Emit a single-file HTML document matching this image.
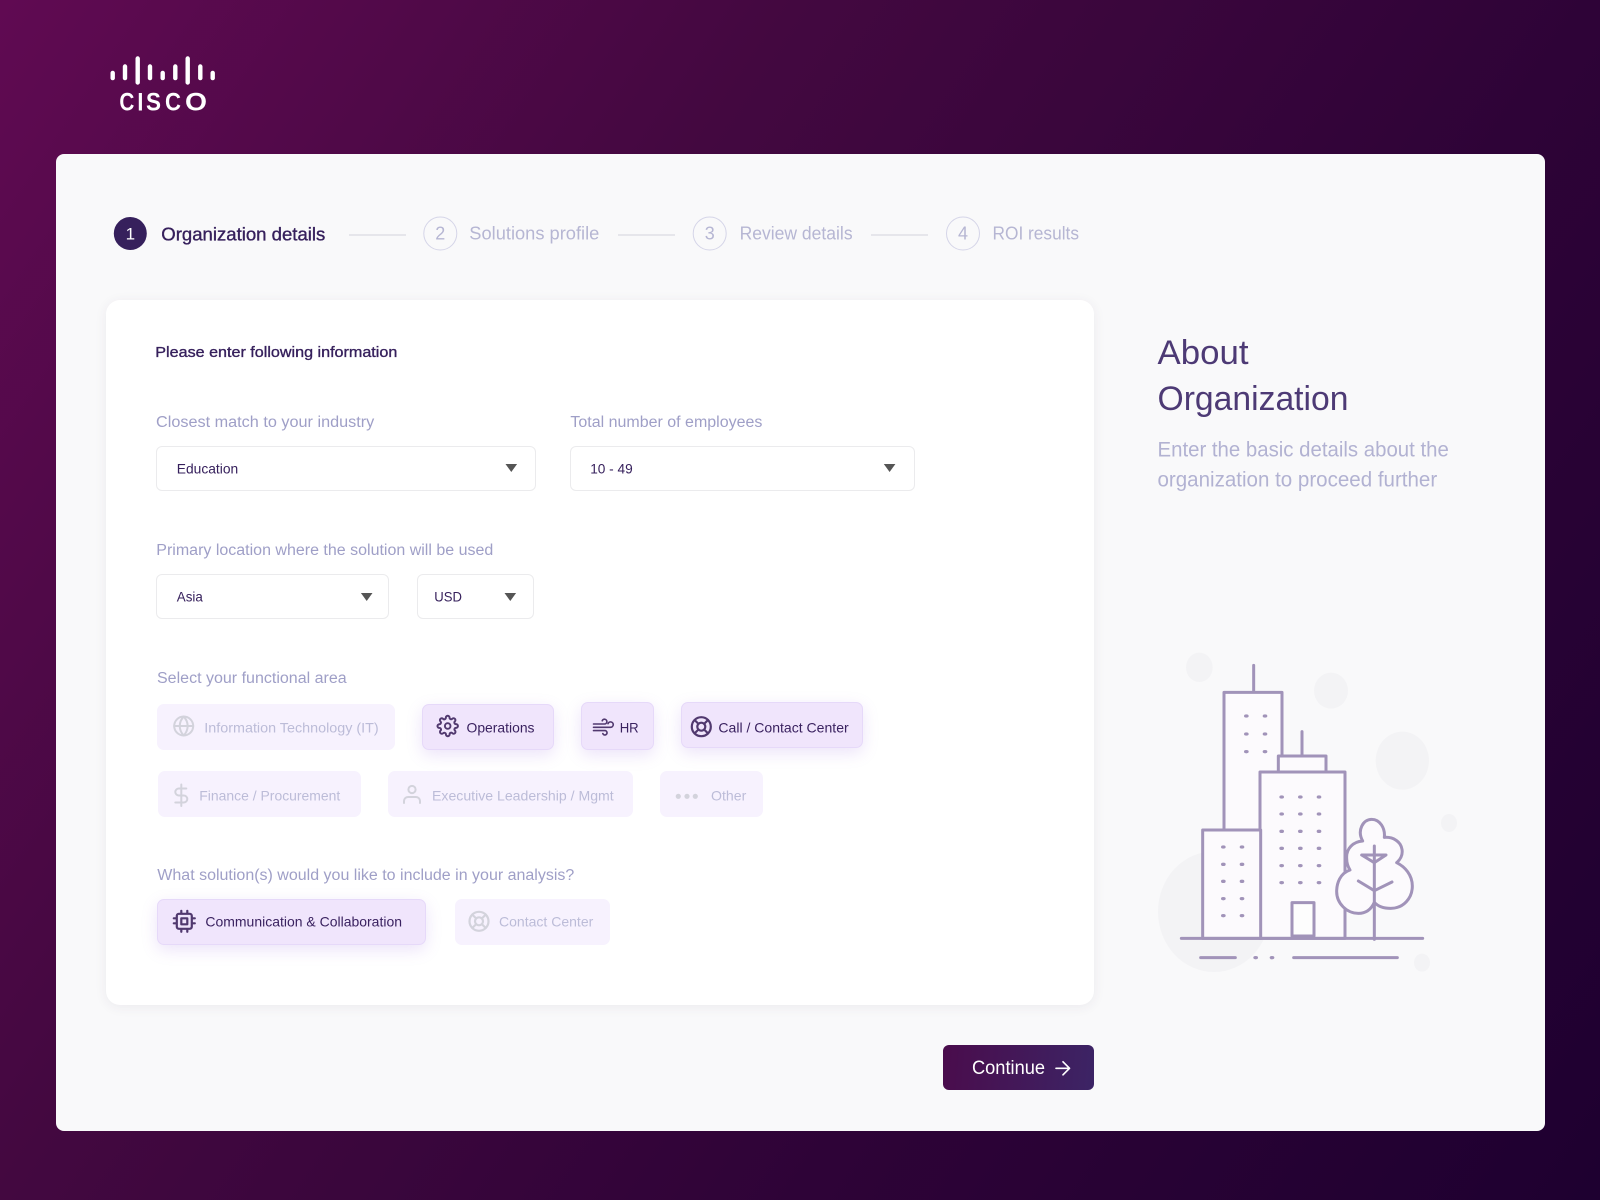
<!DOCTYPE html>
<html lang="en">
<head>
<meta charset="utf-8">
<title>Cisco - Organization details</title>
<style>
html,body{margin:0;padding:0;width:1600px;height:1200px;overflow:hidden}
body{position:relative;background:linear-gradient(123.7deg,#600a52 0%,#430840 33.3%,#2e0337 66.7%,#1e0030 100%);font-family:"Liberation Sans",sans-serif}
div{position:absolute;box-sizing:border-box}
.card{left:56px;top:154px;width:1489px;height:977px;background:#f9f9fa;border-radius:8px}
.panel{left:106px;top:300px;width:988px;height:705px;background:#fff;border-radius:14px;box-shadow:0 2px 12px rgba(60,40,90,.07)}
.sel{background:#fff;border:1.5px solid #ebebed;border-radius:6px}
.chip{background:#f7f2fe;border-radius:7px}
.on{background:#f0e5fc;border:1px solid #e6d9f9;box-shadow:0 5px 16px rgba(150,100,220,.18)}
.btn{left:943px;top:1045px;width:151px;height:45px;border-radius:6px;background:linear-gradient(95deg,#4a0c4c,#3c2465)}
svg.o{position:absolute;left:0;top:0}
text{font-family:"Liberation Sans",sans-serif}
.d{fill:#36205c}
.l{fill:#9f9fc7;font-size:15.5px}
.m{fill:#b6b6d3;font-size:18px}
.f{fill:#bcbcd8;font-size:14px}
.a{fill:#3a2260;font-size:14px}
.v{fill:#36205c;font-size:14px}
.ic{fill:none;stroke-linecap:round;stroke-linejoin:round}
.dim{stroke:#d3d3dc;stroke-width:2}
.act{stroke:#51396f;stroke-width:1.9}
</style>
</head>
<body>
<div class="card"></div>
<div class="panel"></div>

<div class="sel" style="left:156px;top:446px;width:380px;height:45px"></div>
<div class="sel" style="left:570px;top:446px;width:345px;height:45px"></div>
<div class="sel" style="left:156px;top:574px;width:233px;height:45px"></div>
<div class="sel" style="left:417px;top:574px;width:117px;height:45px"></div>

<div class="chip" style="left:157px;top:704px;width:238px;height:46px"></div>
<div class="chip on" style="left:422px;top:704px;width:132px;height:46px"></div>
<div class="chip on" style="left:581px;top:702px;width:73px;height:48px"></div>
<div class="chip on" style="left:681px;top:702px;width:182px;height:46px"></div>
<div class="chip" style="left:158px;top:771px;width:203px;height:46px"></div>
<div class="chip" style="left:388px;top:771px;width:245px;height:46px"></div>
<div class="chip" style="left:660px;top:771px;width:103px;height:46px"></div>
<div class="chip on" style="left:157px;top:899px;width:269px;height:46px"></div>
<div class="chip" style="left:455px;top:899px;width:155px;height:46px"></div>
<div class="btn"></div>

<svg class="o" width="1600" height="1200" viewBox="0 0 1600 1200" xmlns="http://www.w3.org/2000/svg">
  <!-- logo -->
  <g fill="#fff">
    <rect x="110.5" y="70.7" width="4.4" height="9.6" rx="2.2"/>
    <rect x="122.8" y="64.3" width="4.4" height="16" rx="2.2"/>
    <rect x="135.5" y="56.3" width="4.4" height="28.4" rx="2.2"/>
    <rect x="147.8" y="64.3" width="4.4" height="16" rx="2.2"/>
    <rect x="160.5" y="70.7" width="4.4" height="9.6" rx="2.2"/>
    <rect x="173.1" y="64.3" width="4.4" height="16" rx="2.2"/>
    <rect x="185.5" y="56.3" width="4.4" height="28.4" rx="2.2"/>
    <rect x="198.1" y="64.3" width="4.4" height="16" rx="2.2"/>
    <rect x="210.5" y="70.7" width="4.4" height="9.6" rx="2.2"/>
    <g font-size="25" font-weight="700">
      <text x="119.4" y="110.7" textLength="15" lengthAdjust="spacingAndGlyphs">C</text>
      <text x="137.4" y="110.7" textLength="6" lengthAdjust="spacingAndGlyphs">I</text>
      <text x="146" y="110.7" textLength="15" lengthAdjust="spacingAndGlyphs">S</text>
      <text x="165" y="110.7" textLength="16" lengthAdjust="spacingAndGlyphs">C</text>
      <text x="185" y="110.7" textLength="22" lengthAdjust="spacingAndGlyphs">O</text>
    </g>
  </g>

  <!-- stepper -->
  <circle cx="130.3" cy="233.5" r="16.5" fill="#36205c"/>
  <text x="130.3" y="239.5" text-anchor="middle" font-size="17" fill="#fff">1</text>
  <text x="161.3" y="240.3" font-size="18" class="d" stroke="#36205c" stroke-width=".35" textLength="164" lengthAdjust="spacingAndGlyphs">Organization details</text>
  <line x1="349" y1="235" x2="406" y2="235" stroke="#d2d2dc" stroke-width="1"/>
  <circle cx="440.3" cy="233.5" r="16.5" fill="none" stroke="#d5d5e8" stroke-width="1"/>
  <text x="440.3" y="239.5" text-anchor="middle" class="m">2</text>
  <text x="469.3" y="239.5" class="m" textLength="130" lengthAdjust="spacingAndGlyphs">Solutions profile</text>
  <line x1="618" y1="235" x2="675" y2="235" stroke="#d2d2dc" stroke-width="1"/>
  <circle cx="709.7" cy="233.5" r="16.5" fill="none" stroke="#d5d5e8" stroke-width="1"/>
  <text x="709.7" y="239.5" text-anchor="middle" class="m">3</text>
  <text x="739.6" y="239.5" class="m" textLength="113" lengthAdjust="spacingAndGlyphs">Review details</text>
  <line x1="871" y1="235" x2="928" y2="235" stroke="#d2d2dc" stroke-width="1"/>
  <circle cx="963" cy="233.5" r="16.5" fill="none" stroke="#d5d5e8" stroke-width="1"/>
  <text x="963" y="239.5" text-anchor="middle" class="m">4</text>
  <text x="992.5" y="239.5" class="m" textLength="86.5" lengthAdjust="spacingAndGlyphs">ROI results</text>

  <!-- form text -->
  <text x="155.3" y="357" font-size="15" class="d" stroke="#36205c" stroke-width=".35" textLength="242" lengthAdjust="spacingAndGlyphs">Please enter following information</text>
  <text x="156" y="427" class="l" textLength="218.3" lengthAdjust="spacingAndGlyphs">Closest match to your industry</text>
  <text x="570.4" y="427" class="l" textLength="192" lengthAdjust="spacingAndGlyphs">Total number of employees</text>
  <text x="176.8" y="473.3" class="v" textLength="61.4" lengthAdjust="spacingAndGlyphs">Education</text>
  <text x="590.2" y="473.3" class="v" textLength="42.5" lengthAdjust="spacingAndGlyphs">10 - 49</text>
  <path d="M505.5 464h11.6l-5.8 8z" fill="#555"/>
  <path d="M883.8 464h11.6l-5.8 8z" fill="#555"/>

  <text x="156.3" y="555" class="l" textLength="337" lengthAdjust="spacingAndGlyphs">Primary location where the solution will be used</text>
  <text x="176.8" y="601.3" class="v" textLength="26" lengthAdjust="spacingAndGlyphs">Asia</text>
  <text x="434.3" y="601.3" class="v" textLength="27.7" lengthAdjust="spacingAndGlyphs">USD</text>
  <path d="M360.9 593h11.6l-5.8 8z" fill="#555"/>
  <path d="M504.5 593h11.6l-5.8 8z" fill="#555"/>

  <text x="157" y="683" class="l" textLength="189.7" lengthAdjust="spacingAndGlyphs">Select your functional area</text>
  <text x="204.3" y="732.5" class="f" textLength="174.4" lengthAdjust="spacingAndGlyphs">Information Technology (IT)</text>
  <text x="466.5" y="732.5" class="a" textLength="68" lengthAdjust="spacingAndGlyphs">Operations</text>
  <text x="619.7" y="732.5" class="a" textLength="19" lengthAdjust="spacingAndGlyphs">HR</text>
  <text x="718.4" y="732.5" class="a" textLength="130.3" lengthAdjust="spacingAndGlyphs">Call / Contact Center</text>
  <text x="199.3" y="800.3" class="f" textLength="141" lengthAdjust="spacingAndGlyphs">Finance / Procurement</text>
  <text x="432" y="800.3" class="f" textLength="181.7" lengthAdjust="spacingAndGlyphs">Executive Leadership / Mgmt</text>
  <text x="711" y="800.3" class="f" textLength="35.3" lengthAdjust="spacingAndGlyphs">Other</text>
  <text x="157.3" y="880" class="l" textLength="417" lengthAdjust="spacingAndGlyphs">What solution(s) would you like to include in your analysis?</text>
  <text x="205.4" y="926.7" class="a" textLength="196.6" lengthAdjust="spacingAndGlyphs">Communication &amp; Collaboration</text>
  <text x="499" y="926.7" class="f" textLength="94.3" lengthAdjust="spacingAndGlyphs">Contact Center</text>

  <!-- chip icons -->
  <g class="ic dim" transform="translate(171.7,714)">
    <circle cx="12" cy="12" r="9.5"/><line x1="2.5" y1="12" x2="21.5" y2="12"/>
    <path d="M12 2.5a14.5 14.5 0 0 1 4 9.5 14.5 14.5 0 0 1-4 9.5 14.5 14.5 0 0 1-4-9.5 14.5 14.5 0 0 1 4-9.5z"/>
  </g>
  <g class="ic act" transform="translate(447.7,726) scale(.93) translate(-12,-12)" style="stroke-width:2.1">
    <circle cx="12" cy="12" r="3"/>
    <path d="M19.4 15a1.65 1.65 0 0 0 .33 1.82l.06.06a2 2 0 0 1 0 2.83 2 2 0 0 1-2.83 0l-.06-.06a1.65 1.65 0 0 0-1.82-.33 1.65 1.65 0 0 0-1 1.51V21a2 2 0 0 1-2 2 2 2 0 0 1-2-2v-.09A1.65 1.65 0 0 0 9 19.4a1.65 1.65 0 0 0-1.82.33l-.06.06a2 2 0 0 1-2.83 0 2 2 0 0 1 0-2.83l.06-.06a1.65 1.65 0 0 0 .33-1.82 1.65 1.65 0 0 0-1.51-1H3a2 2 0 0 1-2-2 2 2 0 0 1 2-2h.09A1.65 1.65 0 0 0 4.6 9a1.65 1.65 0 0 0-.33-1.82l-.06-.06a2 2 0 0 1 0-2.83 2 2 0 0 1 2.83 0l.06.06a1.65 1.65 0 0 0 1.82.33H9a1.65 1.65 0 0 0 1-1.51V3a2 2 0 0 1 2-2 2 2 0 0 1 2 2v.09a1.65 1.65 0 0 0 1 1.51 1.65 1.65 0 0 0 1.82-.33l.06-.06a2 2 0 0 1 2.83 0 2 2 0 0 1 0 2.83l-.06.06a1.65 1.65 0 0 0-.33 1.82V9a1.65 1.65 0 0 0 1.51 1H21a2 2 0 0 1 2 2 2 2 0 0 1-2 2h-.09a1.65 1.65 0 0 0-1.51 1z"/>
  </g>
  <g class="ic act" style="stroke-width:1.6">
    <path d="M593.5 724H604.5a2.4 2.4 0 1 0-2.3-3.2M593.5 727.3H610.5a2.7 2.7 0 1 0-2.5-3.6M593.5 730.6H604.8a2.2 2.2 0 1 1-2 3"/>
  </g>
  <g class="ic act" transform="translate(689.3,714.7)" style="stroke-width:2.2">
    <circle cx="12" cy="12" r="9.5"/><circle cx="12" cy="12" r="4"/>
    <line x1="5.3" y1="5.3" x2="9.17" y2="9.17"/><line x1="14.83" y1="14.83" x2="18.7" y2="18.7"/>
    <line x1="14.83" y1="9.17" x2="18.7" y2="5.3"/><line x1="5.3" y1="18.7" x2="9.17" y2="14.83"/>
  </g>
  <g class="ic dim" transform="translate(169.3,783)">
    <line x1="12" y1="1.5" x2="12" y2="23"/>
    <path d="M17 5.5H9.5a3.5 3.5 0 0 0 0 7h5a3.5 3.5 0 0 1 0 7H6"/>
  </g>
  <g class="ic dim" transform="translate(400,782)">
    <path d="M20 21v-2a4 4 0 0 0-4-4H8a4 4 0 0 0-4 4v2"/><circle cx="12" cy="7.5" r="3.6"/>
  </g>
  <g fill="#d3d3dc">
    <circle cx="678.3" cy="796.3" r="2.6"/><circle cx="687" cy="796.3" r="2.6"/><circle cx="695.3" cy="796.3" r="2.6"/>
  </g>
  <g class="ic act" transform="translate(172.3,909.3)" style="stroke-width:2.2">
    <rect x="4.5" y="4.5" width="15" height="15" rx="2"/><rect x="9" y="9" width="6" height="6"/>
    <line x1="9" y1="1.5" x2="9" y2="4"/><line x1="15" y1="1.5" x2="15" y2="4"/>
    <line x1="9" y1="20" x2="9" y2="22.5"/><line x1="15" y1="20" x2="15" y2="22.5"/>
    <line x1="20" y1="9" x2="22.5" y2="9"/><line x1="20" y1="14" x2="22.5" y2="14"/>
    <line x1="1.5" y1="9" x2="4" y2="9"/><line x1="1.5" y1="14" x2="4" y2="14"/>
  </g>
  <g class="ic dim" transform="translate(467,909.3)" style="stroke-width:2.2">
    <circle cx="12" cy="12" r="9.5"/><circle cx="12" cy="12" r="4"/>
    <line x1="5.3" y1="5.3" x2="9.17" y2="9.17"/><line x1="14.83" y1="14.83" x2="18.7" y2="18.7"/>
    <line x1="14.83" y1="9.17" x2="18.7" y2="5.3"/><line x1="5.3" y1="18.7" x2="9.17" y2="14.83"/>
  </g>

  <!-- continue -->
  <text x="972" y="1073.8" font-size="19" fill="#fff" textLength="73" lengthAdjust="spacingAndGlyphs">Continue</text>
  <path d="M1056 1068.3h13M1063 1061.8l6.5 6.5-6.5 6.5" fill="none" stroke="#fff" stroke-width="1.7" stroke-linecap="round" stroke-linejoin="round"/>

  <!-- about -->
  <text x="1157.5" y="364" font-size="34" fill="#4d3a75" textLength="91" lengthAdjust="spacingAndGlyphs">About</text>
  <text x="1157.5" y="410" font-size="34" fill="#4d3a75" textLength="191" lengthAdjust="spacingAndGlyphs">Organization</text>
  <text x="1157.5" y="456.7" font-size="21" fill="#b2b2d2" textLength="291.3" lengthAdjust="spacingAndGlyphs">Enter the basic details about the</text>
  <text x="1157.5" y="486.7" font-size="21" fill="#b2b2d2" textLength="279.7" lengthAdjust="spacingAndGlyphs">organization to proceed further</text>

  <!-- illustration -->
  <svg x="1140" y="640" width="340" height="340" viewBox="0 0 1020 1020">
    <g fill="#f3f3f5">
      <ellipse cx="178" cy="82" rx="40" ry="44"/>
      <ellipse cx="573" cy="152" rx="51" ry="54"/>
      <ellipse cx="787" cy="362" rx="80" ry="87"/>
      <ellipse cx="927" cy="549" rx="24" ry="27"/>
      <ellipse cx="846" cy="968" rx="24" ry="27"/>
      <ellipse cx="222" cy="815" rx="168" ry="181"/>
    </g>
    <g stroke="#a193b9" stroke-width="9" stroke-linecap="round" stroke-linejoin="round" fill="#fcfafd">
      <line x1="341" y1="76" x2="341" y2="157"/>
      <rect x="252" y="157" width="174" height="413"/>
      <line x1="486" y1="275" x2="486" y2="348"/>
      <rect x="415" y="348" width="143" height="48"/>
      <rect x="360" y="396" width="255" height="499"/>
      <rect x="188" y="570" width="174" height="325"/>
      <rect x="456" y="788" width="66" height="100" fill="#fdfdfd"/>
      <line x1="124" y1="895" x2="848" y2="895"/>
      <path d="M630 690C600 700 590 730 590 755C590 790 620 820 655 820C680 820 695 805 703 787C715 800 735 805 752 805C790 805 817 775 817 738C817 705 795 680 770 668C785 655 788 640 786 628C782 605 760 590 733 592C736 565 720 538 695 538C670 538 650 570 668 603C640 605 618 625 620 655C620 670 625 682 630 690Z"/>
      <line x1="703" y1="618" x2="703" y2="898"/>
      <path d="M655 723L703 752L756 726" fill="none"/>
      <path d="M665 645H738L703 668Z" fill="none"/>
      <line x1="182" y1="953" x2="286" y2="953"/>
      <line x1="461" y1="953" x2="772" y2="953"/>
    </g>
    <g fill="#a193b9">
      <ellipse cx="319" cy="228" rx="7" ry="5"/><ellipse cx="375" cy="228" rx="7" ry="5"/>
      <ellipse cx="319" cy="282" rx="7" ry="5"/><ellipse cx="375" cy="282" rx="7" ry="5"/>
      <ellipse cx="319" cy="335" rx="7" ry="5"/><ellipse cx="375" cy="335" rx="7" ry="5"/>
      <ellipse cx="250" cy="621" rx="7" ry="5"/><ellipse cx="306" cy="621" rx="7" ry="5"/>
      <ellipse cx="250" cy="673" rx="7" ry="5"/><ellipse cx="306" cy="673" rx="7" ry="5"/>
      <ellipse cx="250" cy="724" rx="7" ry="5"/><ellipse cx="306" cy="724" rx="7" ry="5"/>
      <ellipse cx="250" cy="776" rx="7" ry="5"/><ellipse cx="306" cy="776" rx="7" ry="5"/>
      <ellipse cx="250" cy="827" rx="7" ry="5"/><ellipse cx="306" cy="827" rx="7" ry="5"/>
      <ellipse cx="425" cy="471" rx="7" ry="5"/><ellipse cx="481" cy="471" rx="7" ry="5"/><ellipse cx="537" cy="471" rx="7" ry="5"/>
      <ellipse cx="425" cy="522" rx="7" ry="5"/><ellipse cx="481" cy="522" rx="7" ry="5"/><ellipse cx="537" cy="522" rx="7" ry="5"/>
      <ellipse cx="425" cy="574" rx="7" ry="5"/><ellipse cx="481" cy="574" rx="7" ry="5"/><ellipse cx="537" cy="574" rx="7" ry="5"/>
      <ellipse cx="425" cy="625" rx="7" ry="5"/><ellipse cx="481" cy="625" rx="7" ry="5"/><ellipse cx="537" cy="625" rx="7" ry="5"/>
      <ellipse cx="425" cy="677" rx="7" ry="5"/><ellipse cx="481" cy="677" rx="7" ry="5"/><ellipse cx="537" cy="677" rx="7" ry="5"/>
      <ellipse cx="425" cy="728" rx="7" ry="5"/><ellipse cx="481" cy="728" rx="7" ry="5"/><ellipse cx="537" cy="728" rx="7" ry="5"/>
      <ellipse cx="347" cy="953" rx="7" ry="5"/><ellipse cx="396" cy="953" rx="7" ry="5"/>
    </g>
  </svg>
</svg>
</body>
</html>
